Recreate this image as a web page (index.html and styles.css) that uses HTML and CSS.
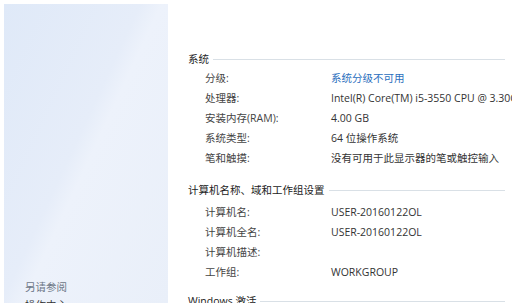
FILE: index.html
```html
<!DOCTYPE html>
<html lang="zh-CN">

<head>
  <meta charset="UTF-8">
  <meta name="viewport" content="width=device-width, initial-scale=1.0">
  <title>系统</title>
  <link rel="stylesheet" href="styles.css">
</head>

<body>
  <div class="window">
    <!-- 左侧栏 -->
    <div class="sidebar">
      <div class="see-also">
        <p class="see-title">另请参阅</p>
        <p class="see-link">操作中心</p>
      </div>
    </div>

    <!-- 右侧内容 -->
    <div class="content">
      <div class="section">
        <div class="section-head"><span>系统</span><i class="rule"></i></div>
        <div class="row"><span class="label">分级:</span><span class="value link">系统分级不可用</span></div>
        <div class="row"><span class="label">处理器:</span><span class="value">Intel(R) Core(TM) i5-3550 CPU @ 3.30GHz</span></div>
        <div class="row"><span class="label">安装内存(RAM):</span><span class="value">4.00 GB</span></div>
        <div class="row"><span class="label">系统类型:</span><span class="value">64 位操作系统</span></div>
        <div class="row"><span class="label">笔和触摸:</span><span class="value">没有可用于此显示器的笔或触控输入</span></div>
      </div>

      <div class="section second">
        <div class="section-head"><span>计算机名称、域和工作组设置</span><i class="rule"></i></div>
        <div class="rows">
          <div class="row"><span class="label">计算机名:</span><span class="value">USER-20160122OL</span></div>
          <div class="row"><span class="label">计算机全名:</span><span class="value">USER-20160122OL</span></div>
          <div class="row"><span class="label">计算机描述:</span><span class="value"></span></div>
          <div class="row"><span class="label">工作组:</span><span class="value">WORKGROUP</span></div>
        </div>
      </div>

      <div class="section third">
        <div class="section-head"><span>Windows 激活</span><i class="rule"></i></div>
      </div>
    </div>
  </div>
</body>

</html>
```

FILE: styles.css
```css
body {
  margin: 0;
  height: 303px;
  overflow: hidden;
  background-color: #fff;
  font-family: "Open Sans", "Noto Sans CJK SC", sans-serif;
  font-size: 10.5px;
  color: #444;
}

p {
  margin: 0;
}

.window {
  display: flex;
  height: 100%;
}

/* 左侧栏 */
.sidebar {
  width: 164px;
  margin: 4px 0 0 4px;
  flex-shrink: 0;
  display: flex;
  flex-direction: column;
  justify-content: flex-end;
  background: linear-gradient(115deg, #dfe9f8 0%, #e6edf9 45%, #edf2fb 52%, #e9eff9 100%);
}

.see-also {
  padding: 0 0 0 21px;
  margin-bottom: -11px;
}

.see-title {
  height: 18px;
  line-height: 18px;
  color: #6d7787;
}

.see-link {
  height: 18px;
  line-height: 18px;
  color: #333;
}

/* 内容 */
.content {
  flex: 1;
  min-width: 0;
  padding: 48px 7px 0 20px;
  overflow: hidden;
}

.section-head {
  display: flex;
  align-items: center;
  height: 20px;
  color: #222;
}

.section-head span {
  white-space: nowrap;
  padding-right: 4px;
}

.rule {
  flex: 1;
  height: 1px;
  margin-top: 2px;
  background-color: #d9e0e6;
}

.row {
  display: flex;
  height: 20px;
  line-height: 20px;
  padding-left: 17px;
  white-space: nowrap;
}

.label {
  width: 126px;
  flex-shrink: 0;
  color: #444;
}

.value {
  color: #333;
}

.link {
  color: #2a6ebd;
}

.second {
  margin-top: 11px;
}

.second .rows {
  margin-top: 3px;
}

.third {
  margin-top: 8px;
}
```
